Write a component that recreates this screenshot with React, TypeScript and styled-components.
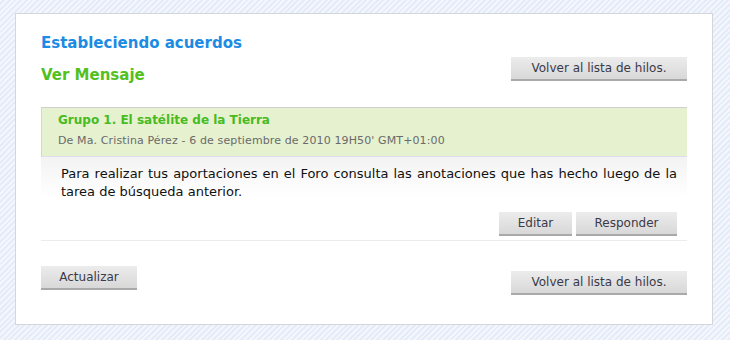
import React from 'react';
import styled, { createGlobalStyle } from 'styled-components';

const GlobalStyle = createGlobalStyle`
  html, body {
    margin: 0;
    padding: 0;
  }
  body {
    width: 730px;
    height: 340px;
    overflow: hidden;
    font-family: "DejaVu Sans", Verdana, sans-serif;
    background: repeating-linear-gradient(
      135deg,
      #f3f6fc 0px,
      #f3f6fc 2px,
      #e5ebf7 2px,
      #e5ebf7 4px
    );
  }
`;

const Panel = styled.div`
  box-sizing: border-box;
  width: 698px;
  height: 312px;
  margin: 13px 0 0 15px;
  padding: 20px 25px 0 25px;
  background: #fff;
  border: 1px solid #d3d6dc;
`;

const TopRow = styled.div`
  display: flex;
  justify-content: space-between;
  align-items: flex-end;
`;

const Titles = styled.div`
  display: flex;
  flex-direction: column;
`;

const Title = styled.h1<{ $tone: string }>`
  margin: 0;
  font-size: 15px;
  line-height: 18px;
  font-weight: bold;
  color: ${(p) => p.$tone};
`;

const SubTitle = styled(Title)`
  margin-top: 14px;
`;

const Button = styled.button<{ $width: number }>`
  box-sizing: border-box;
  width: ${(p) => p.$width}px;
  height: 24px;
  padding: 0;
  border: none;
  border-bottom: 2px solid #a9a9a9;
  background: linear-gradient(#ececec, #d8d8d8);
  font-family: "DejaVu Sans", Verdana, sans-serif;
  font-size: 12px;
  color: #3a3a48;
  cursor: pointer;
`;

const TopButton = styled(Button)`
  margin-bottom: 3px;
`;

const Message = styled.div`
  margin-top: 23px;
  border-bottom: 1px solid #ececec;
`;

const MessageHeader = styled.div`
  padding: 4px 16px 8px 16px;
  background: #e6f1d0;
  border-top: 1px solid #cfcfcf;
  border-left: 1px solid #d4d8cc;
  border-bottom: 1px solid #dcdfee;
`;

const MessageTitle = styled.div`
  font-size: 12px;
  line-height: 17px;
  font-weight: bold;
  color: #47bb1f;
`;

const Meta = styled.div`
  margin-top: 5px;
  font-size: 11px;
  line-height: 14px;
  letter-spacing: 0.12px;
  color: #6a6a6a;
`;

const MessageBody = styled.div`
  padding: 8px 10px 4px 20px;
  background: linear-gradient(#f3f3f3, #ffffff 40px);
`;

const BodyText = styled.p`
  margin: 0;
  font-size: 13px;
  line-height: 18px;
  color: #111;
  text-align: justify;
`;

const Actions = styled.div`
  display: flex;
  justify-content: flex-end;
  gap: 4px;
  margin-top: 11px;
`;

const Footer = styled.div`
  display: flex;
  justify-content: space-between;
  align-items: flex-start;
  margin-top: 25px;
`;

const LowerButton = styled(Button)`
  margin-top: 5px;
`;

const App = () => (
  <>
    <GlobalStyle />
    <Panel>
      <TopRow>
        <Titles>
          <Title $tone="#1b8be4">Estableciendo acuerdos</Title>
          <SubTitle $tone="#52c01d">Ver Mensaje</SubTitle>
        </Titles>
        <TopButton $width={176}>Volver al lista de hilos.</TopButton>
      </TopRow>

      <Message>
        <MessageHeader>
          <MessageTitle>Grupo 1. El satélite de la Tierra</MessageTitle>
          <Meta>
            De Ma. Cristina Pérez - 6 de septiembre de 2010 19H50' GMT+01:00
          </Meta>
        </MessageHeader>
        <MessageBody>
          <BodyText>
            Para realizar tus aportaciones en el Foro consulta las anotaciones
            que has hecho luego de la tarea de búsqueda anterior.
          </BodyText>
          <Actions>
            <Button $width={73}>Editar</Button>
            <Button $width={101}>Responder</Button>
          </Actions>
        </MessageBody>
      </Message>

      <Footer>
        <Button $width={96}>Actualizar</Button>
        <LowerButton $width={176}>Volver al lista de hilos.</LowerButton>
      </Footer>
    </Panel>
  </>
);

export default App;
